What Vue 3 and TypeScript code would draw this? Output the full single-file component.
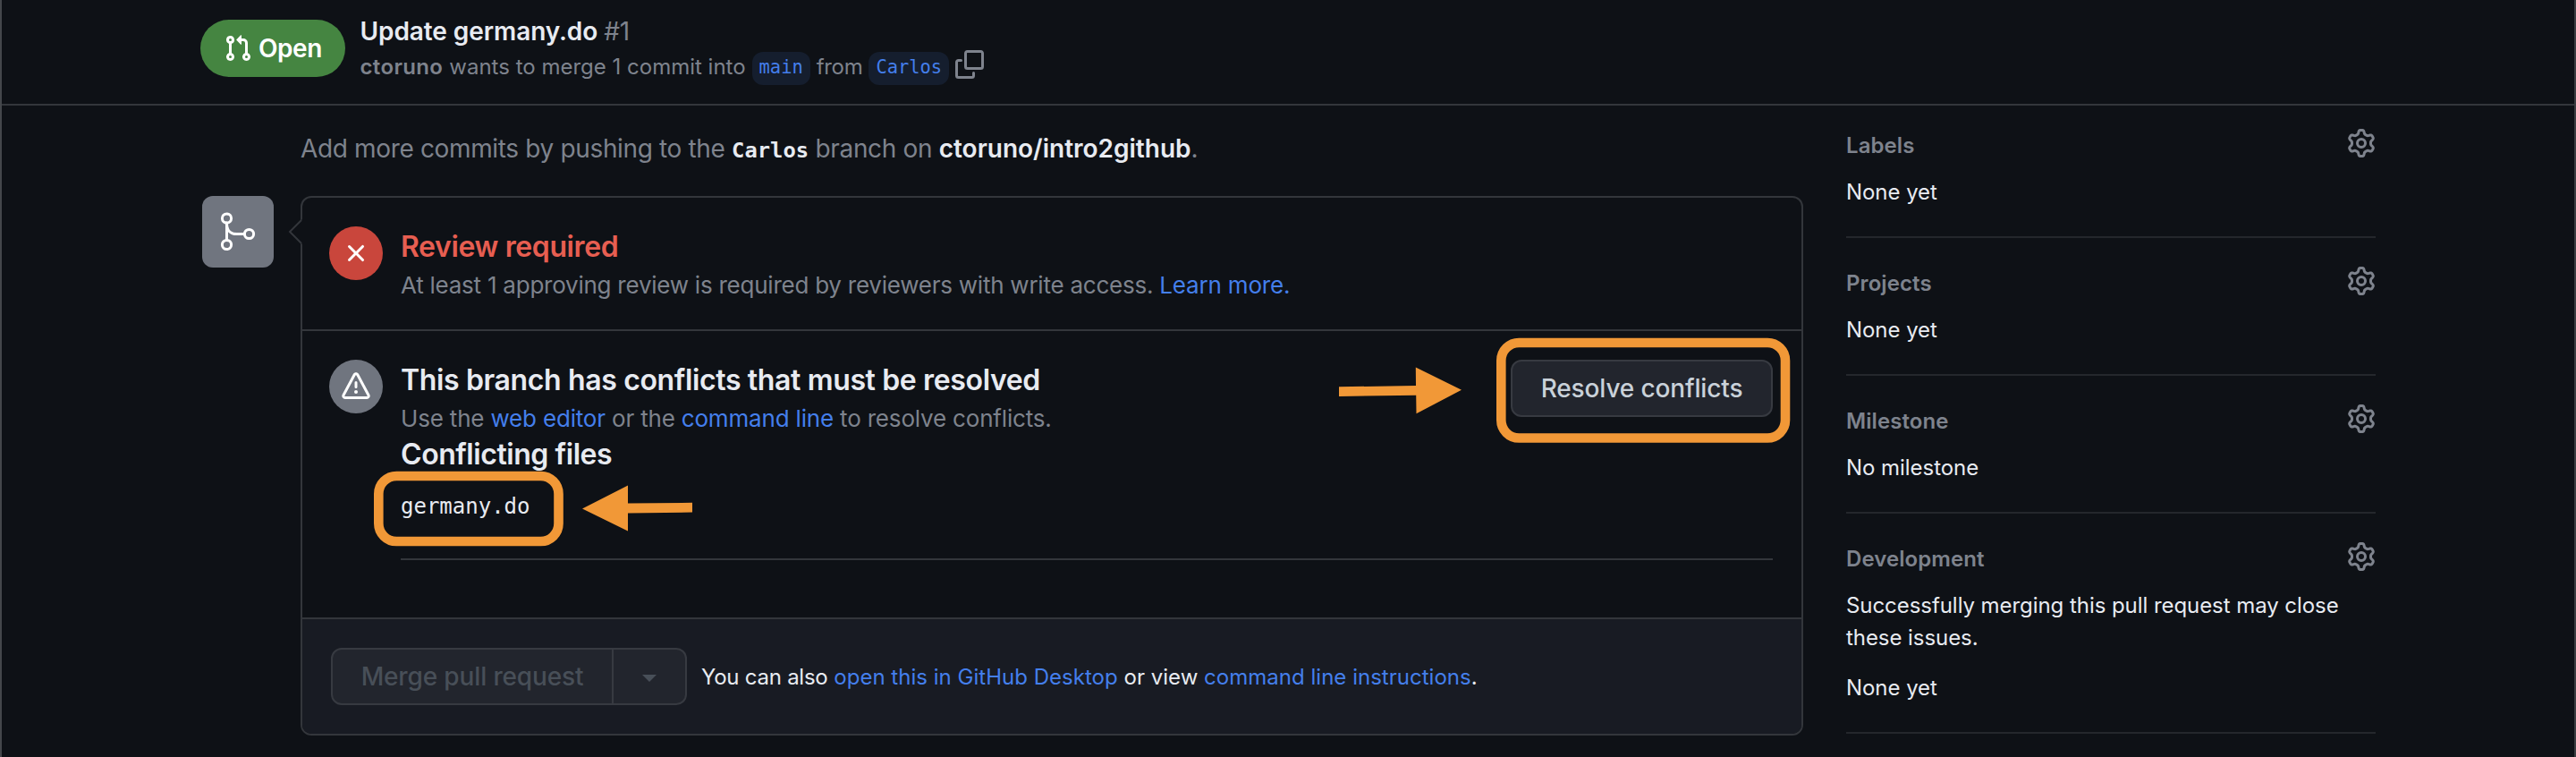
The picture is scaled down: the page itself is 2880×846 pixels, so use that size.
<script setup lang="ts">
interface SidebarItem {
  title: string
  note?: string
  value: string
}

const sidebar: SidebarItem[] = [
  { title: 'Labels', value: 'None yet' },
  { title: 'Projects', value: 'None yet' },
  { title: 'Milestone', value: 'No milestone' },
  {
    title: 'Development',
    note: 'Successfully merging this pull request may close these issues.',
    value: 'None yet',
  },
]

const conflictingFiles: string[] = ['germany.do']
</script>

<template>
  <div class="page">
    <header class="header">
      <span class="state">
        <svg class="icon" viewBox="0 0 16 16" aria-hidden="true">
          <path d="M7.177 3.073L9.573.677A.25.25 0 0110 .854v4.792a.25.25 0 01-.427.177L7.177 3.427a.25.25 0 010-.354zM3.75 2.5a.75.75 0 100 1.5.75.75 0 000-1.5zm-2.25.75a2.25 2.25 0 113 2.122v5.256a2.251 2.251 0 11-1.5 0V5.372A2.25 2.25 0 011.5 3.25zM11 2.5h-1V4h1a1 1 0 011 1v5.628a2.251 2.251 0 101.5 0V5A2.5 2.5 0 0011 2.5zm1 10.25a.75.75 0 111.5 0 .75.75 0 01-1.5 0zM3.75 12a.75.75 0 100 1.5.75.75 0 000-1.5z" />
        </svg>
        <span>Open</span>
      </span>
      <div class="summary">
        <h1 class="title">Update germany.do <span class="number">#1</span></h1>
        <div class="meta">
          <strong class="author">ctoruno</strong>
          <span>wants to merge 1 commit into</span>
          <code class="ref">main</code>
          <span class="from">from</span>
          <code class="ref">Carlos</code>
          <svg class="icon copy" viewBox="0 0 16 16" aria-hidden="true">
            <path d="M0 6.75C0 5.784.784 5 1.75 5h1.5a.75.75 0 0 1 0 1.5h-1.5a.25.25 0 0 0-.25.25v7.5c0 .138.112.25.25.25h7.5a.25.25 0 0 0 .25-.25v-1.5a.75.75 0 0 1 1.5 0v1.5A1.75 1.75 0 0 1 9.25 16h-7.5A1.75 1.75 0 0 1 0 14.25Z" />
            <path d="M5 1.75C5 .784 5.784 0 6.75 0h7.5C15.216 0 16 .784 16 1.75v7.5A1.75 1.75 0 0 1 14.25 11h-7.5A1.75 1.75 0 0 1 5 9.25Zm1.75-.25a.25.25 0 0 0-.25.25v7.5c0 .138.112.25.25.25h7.5a.25.25 0 0 0 .25-.25v-7.5a.25.25 0 0 0-.25-.25Z" />
          </svg>
        </div>
      </div>
    </header>

    <div class="body">
      <main class="discussion">
        <p class="hint">Add more commits by pushing to the <code>Carlos</code> branch on <strong>ctoruno/intro2github</strong>.</p>

        <div class="merge">
          <div class="avatar">
            <svg viewBox="0 0 80 80" aria-hidden="true">
              <circle cx="27.5" cy="25" r="5.1" />
              <circle cx="27.5" cy="54.5" r="5.1" />
              <circle cx="52.5" cy="42.5" r="5.1" />
              <path d="M27.5 30v19M27.5 31c0 7 4 11.5 11 11.5h9" />
            </svg>
          </div>

          <section class="box">
            <svg class="caret" viewBox="0 0 16 28" aria-hidden="true">
              <path class="caret-fill" d="M16 0L2 14l14 14z" />
              <path class="caret-line" d="M15 1L2 14l13 13" />
            </svg>

            <div class="item review">
              <span class="badge danger">
                <svg class="icon" viewBox="0 0 16 16" aria-hidden="true">
                  <path d="M3.72 3.72a.75.75 0 0 1 1.06 0L8 6.94l3.22-3.22a.75.75 0 1 1 1.06 1.06L9.06 8l3.22 3.22a.75.75 0 1 1-1.06 1.06L8 9.06l-3.22 3.22a.75.75 0 0 1-1.06-1.06L6.94 8 3.72 4.78a.75.75 0 0 1 0-1.06Z" />
                </svg>
              </span>
              <div class="item-text">
                <h3 class="heading red">Review required</h3>
                <p class="sub"><span class="tight">At least 1 approving review is required by reviewers with write access.</span> <a>Learn more.</a></p>
              </div>
            </div>

            <div class="item conflicts">
              <span class="badge neutral">
                <svg class="icon" viewBox="0 0 16 16" aria-hidden="true">
                  <path d="M8.22 1.754a.25.25 0 00-.44 0L1.698 13.132a.25.25 0 00.22.368h12.164a.25.25 0 00.22-.368L8.22 1.754zm-1.763-.707c.659-1.234 2.427-1.234 3.086 0l6.082 11.378A1.75 1.75 0 0114.082 15H1.918a1.75 1.75 0 01-1.543-2.575L6.457 1.047zM9 11a1 1 0 11-2 0 1 1 0 012 0zm-.25-5.25a.75.75 0 00-1.5 0v2.5a.75.75 0 001.5 0v-2.5z" />
                </svg>
              </span>
              <div class="item-text">
                <div class="conflict-head">
                  <div>
                    <h3 class="heading">This branch has conflicts that must be resolved</h3>
                    <p class="sub">Use the <a>web editor</a> or the <a>command line</a> to resolve conflicts.</p>
                  </div>
                  <button class="btn resolve">Resolve conflicts</button>
                </div>
                <h3 class="heading files-title">Conflicting files</h3>
                <div class="files">
                  <code v-for="file in conflictingFiles" :key="file">{{ file }}</code>
                </div>
              </div>
            </div>

            <footer class="actions">
              <div class="group">
                <button class="btn merge-btn" disabled>Merge pull request</button>
                <button class="btn toggle" disabled aria-label="Select merge method">
                  <span class="triangle"></span>
                </button>
              </div>
              <p class="alt"><span class="also">You can also</span> <a>open this in GitHub Desktop</a> or view <a>command line instructions</a>.</p>
            </footer>
          </section>
        </div>
      </main>

      <aside class="sidebar">
        <div v-for="item in sidebar" :key="item.title" class="side-item">
          <div class="side-head">
            <span>{{ item.title }}</span>
            <svg class="icon" viewBox="0 0 16 16" aria-hidden="true">
              <path d="M8 0a8.2 8.2 0 0 1 .701.031C9.444.095 9.99.645 10.16 1.29l.288 1.107c.018.066.079.158.212.224.231.114.454.243.668.386.123.082.233.09.299.071l1.103-.303c.644-.176 1.392.021 1.82.63.27.385.506.792.704 1.218.315.675.111 1.422-.364 1.891l-.814.806c-.049.048-.098.147-.088.294.016.257.016.515 0 .772-.01.147.038.246.088.294l.814.806c.475.469.679 1.216.364 1.891a7.977 7.977 0 0 1-.704 1.217c-.428.61-1.176.807-1.82.63l-1.102-.302c-.067-.019-.177-.011-.3.071a5.909 5.909 0 0 1-.668.386c-.133.066-.194.158-.211.224l-.29 1.106c-.168.646-.715 1.196-1.458 1.26a8.006 8.006 0 0 1-1.402 0c-.743-.064-1.289-.614-1.458-1.26l-.289-1.106c-.018-.066-.079-.158-.212-.224a5.738 5.738 0 0 1-.668-.386c-.123-.082-.233-.09-.299-.071l-1.103.303c-.644.176-1.392-.021-1.82-.63a8.12 8.12 0 0 1-.704-1.218c-.315-.675-.111-1.422.363-1.891l.815-.806c.05-.048.098-.147.088-.294a6.214 6.214 0 0 1 0-.772c.01-.147-.038-.246-.088-.294l-.815-.806C.635 6.045.431 5.298.746 4.623a7.92 7.92 0 0 1 .704-1.217c.428-.61 1.176-.807 1.82-.63l1.102.302c.067.019.177.011.3-.071.214-.143.437-.272.668-.386.133-.066.194-.158.211-.224l.29-1.106C6.009.645 6.556.095 7.299.03 7.53.01 7.764 0 8 0Zm-.571 1.525c-.036.003-.108.036-.137.146l-.289 1.105c-.147.561-.549.967-.998 1.189-.173.086-.34.183-.5.29-.417.278-.97.423-1.529.27l-1.103-.303c-.109-.03-.175.016-.195.045-.22.312-.412.644-.573.99-.014.031-.021.11.059.19l.815.806c.411.406.562.957.53 1.456a4.709 4.709 0 0 0 0 .582c.032.499-.119 1.05-.53 1.456l-.815.806c-.081.08-.073.159-.059.19.162.346.353.677.573.989.02.03.085.076.195.046l1.102-.303c.56-.153 1.113-.008 1.53.27.161.107.328.204.501.29.447.222.85.629.997 1.189l.289 1.105c.029.109.101.143.137.146a6.6 6.6 0 0 0 1.142 0c.036-.003.108-.036.137-.146l.289-1.105c.147-.561.549-.967.998-1.189.173-.086.34-.183.5-.29.417-.278.97-.423 1.529-.27l1.103.303c.109.029.175-.016.195-.045.22-.313.411-.644.573-.99.014-.031.021-.11-.059-.19l-.815-.806c-.411-.406-.562-.957-.53-1.456a4.709 4.709 0 0 0 0-.582c-.032-.499.119-1.05.53-1.456l.815-.806c.081-.08.073-.159.059-.19a6.464 6.464 0 0 0-.573-.989c-.02-.03-.085-.076-.195-.046l-1.102.303c-.56.153-1.113.008-1.53-.27a4.44 4.44 0 0 0-.501-.29c-.447-.222-.85-.629-.997-1.189l-.289-1.105c-.029-.11-.101-.143-.137-.146a6.6 6.6 0 0 0-1.142 0ZM11 8a3 3 0 1 1-6 0 3 3 0 0 1 6 0ZM9.5 8a1.5 1.5 0 1 0-3.001.001A1.5 1.5 0 0 0 9.5 8Z" />
            </svg>
          </div>
          <p v-if="item.note" class="note">{{ item.note }}</p>
          <p class="value">{{ item.value }}</p>
        </div>
      </aside>
    </div>

    <!-- Highlight frames and arrows drawn over the page -->
    <svg class="marks" viewBox="0 0 2880 846" aria-hidden="true">
      <rect x="423.3" y="532" width="201.2" height="73" rx="20" />
      <rect x="1678.3" y="383" width="317.7" height="106.5" rx="20" />
      <path d="M651 568.5L702 542.5V562.6L774 561.8V572.6L702 573.4V593.5Z" />
      <path d="M1634 435.7L1582.8 410.5L1583 431L1497 432.3V443L1583.2 441.7L1583.5 462.2Z" />
    </svg>
  </div>
</template>

<style>
html,
body {
  background: #0e1116;
}
</style>

<style scoped>
.page {
  position: relative;
  box-sizing: border-box;
  width: 2880px;
  height: 846px;
  overflow: hidden;
  border-left: 2px solid #44474b;
  border-right: 2px solid #3a3d41;
  background: #0e1116;
  color: #e8ebf1;
  font-family: Inter, "Liberation Sans", sans-serif;
  font-size: 24px;
  line-height: 36px;
}

h1,
h3,
p {
  margin: 0;
}

code {
  font-family: "DejaVu Sans Mono", "Liberation Mono", monospace;
}

a {
  color: #447fec;
}

.icon {
  display: block;
  flex: none;
  width: 32px;
  height: 32px;
  fill: currentColor;
}

.header {
  box-sizing: border-box;
  display: flex;
  height: 118px;
  padding-left: 222px;
  border-bottom: 2px solid #33363b;
}

.state {
  box-sizing: border-box;
  display: flex;
  align-items: center;
  gap: 7px;
  width: 162px;
  height: 64px;
  margin-top: 22px;
  padding-left: 26px;
  border-radius: 32px;
  background: #458541;
  color: #fff;
  font-size: 28px;
  font-weight: 600;
  letter-spacing: -0.45px;
}

.summary {
  margin-left: 16.5px;
  padding-top: 14px;
}

.title {
  font-size: 28px;
  font-weight: 600;
  line-height: 42px;
  letter-spacing: -0.08px;
  white-space: nowrap;
}

.number {
  color: #7e838d;
  font-weight: 400;
}

.meta {
  display: flex;
  align-items: flex-start;
  gap: 7px;
  margin-top: 1px;
  color: #7e838d;
  white-space: nowrap;
}

.copy {
  margin-top: -1px;
}

.author {
  font-weight: 600;
  letter-spacing: 0.35px;
}

.from {
  letter-spacing: -0.3px;
}

.ref {
  box-sizing: border-box;
  height: 37px;
  margin-top: 1px;
  padding: 0 8px;
  border-radius: 12px;
  background: #151e2e;
  color: #447fec;
  font-size: 20.4px;
  line-height: 35px;
}

.body {
  display: flex;
}

.discussion {
  width: 1790px;
  margin-left: 224px;
  padding-top: 27px;
}

.hint {
  height: 42px;
  margin-left: 110px;
  color: #7e838d;
  font-size: 28px;
  line-height: 42px;
  letter-spacing: -0.35px;
  white-space: nowrap;
}

.hint code {
  color: #e8ebf1;
  font-size: 23.8px;
  font-weight: 700;
  line-height: 1;
  letter-spacing: 0;
}

.hint strong {
  color: #e8ebf1;
  font-weight: 600;
  letter-spacing: 0;
}

.merge {
  display: flex;
  gap: 30px;
  margin-top: 32px;
}

.avatar {
  flex: none;
  width: 80px;
  height: 80px;
  border-radius: 12px;
  background: #70757f;
}

.avatar svg {
  display: block;
  fill: none;
  stroke: #fff;
  stroke-width: 3;
  stroke-linecap: round;
}

.box {
  position: relative;
  box-sizing: border-box;
  width: 1680px;
  height: 603px;
  border: 2px solid #33363b;
  border-radius: 12px;
}

.caret {
  position: absolute;
  top: 24px;
  left: -16px;
  width: 16px;
  height: 28px;
}

.caret-fill {
  fill: #0e1116;
}

.caret-line {
  fill: none;
  stroke: #33363b;
  stroke-width: 2;
}

.item {
  box-sizing: border-box;
  display: flex;
  gap: 20px;
  padding: 30px 32px 0 30px;
  border-bottom: 2px solid #33363b;
}

.review {
  height: 149px;
}

.conflicts {
  height: 322px;
}

.badge {
  display: flex;
  flex: none;
  align-items: center;
  justify-content: center;
  width: 60px;
  height: 60px;
  margin-top: 2px;
  border-radius: 50%;
  color: #fff;
}

.danger {
  background: #c9463c;
}

.neutral {
  background: #70757f;
}

.item-text {
  flex: 1;
  padding-top: 1px;
}

.heading {
  font-size: 32px;
  font-weight: 600;
  line-height: 48px;
  letter-spacing: -0.36px;
  white-space: nowrap;
}

.red {
  color: #e75e51;
  letter-spacing: -0.38px;
}

.sub {
  margin-top: 2px;
  color: #7e838d;
  font-size: 26px;
  line-height: 34px;
  letter-spacing: -0.18px;
  white-space: nowrap;
}

.tight {
  letter-spacing: -0.24px;
}

.conflict-head {
  display: flex;
  justify-content: space-between;
}

.btn {
  box-sizing: border-box;
  height: 64px;
  margin: 0;
  padding: 0;
  border: 2px solid #373a41;
  border-radius: 12px;
  background: #22252d;
  color: #c9d1d9;
  font: 500 28px/40px Inter, "Liberation Sans", sans-serif;
  letter-spacing: -0.14px;
  text-align: center;
}

.resolve {
  width: 293px;
  margin-top: 1px;
}

.files-title {
  line-height: 46px;
  letter-spacing: -0.44px;
}

.files {
  display: flex;
  flex-direction: column;
  margin-top: 17px;
  padding-bottom: 40px;
  border-bottom: 2px solid #33363b;
}

.actions {
  display: flex;
  gap: 16px;
  height: 128px;
  box-sizing: border-box;
  padding: 32px 0 0 32px;
  border-radius: 0 0 10px 10px;
  background: #181b23;
}

.group {
  display: flex;
}

.merge-btn {
  width: 316px;
  border-radius: 12px 0 0 12px;
  color: #484f58;
}

.toggle {
  display: flex;
  align-items: center;
  justify-content: center;
  width: 82px;
  border-left: 0;
  border-radius: 0 12px 12px 0;
}

.triangle {
  margin-top: 4px;
  border: 8px solid transparent;
  border-top-color: #484f58;
  border-bottom: 0;
}

.alt {
  line-height: 66px;
  letter-spacing: 0.02px;
  white-space: nowrap;
}

.also {
  letter-spacing: -0.25px;
}

.sidebar {
  width: 592px;
  margin-left: 48px;
}

.side-item {
  padding: 33px 0 31px;
  border-bottom: 2px solid #24272c;
}

.side-item:first-child {
  padding-top: 27px;
}

.side-head {
  display: flex;
  justify-content: space-between;
  height: 36px;
  margin-bottom: 16px;
  color: #7e838d;
  font-weight: 600;
  letter-spacing: 0.08px;
}

.side-head .icon {
  margin-top: -1px;
}

.note {
  margin-bottom: 20px;
  letter-spacing: -0.06px;
}

.value {
  letter-spacing: -0.05px;
}

.marks {
  position: absolute;
  top: 0;
  left: -2px;
  width: 2880px;
  height: 846px;
  pointer-events: none;
}

.marks rect {
  fill: none;
  stroke: #f19837;
  stroke-width: 10.6;
}

.marks path {
  fill: #f19837;
}
</style>
